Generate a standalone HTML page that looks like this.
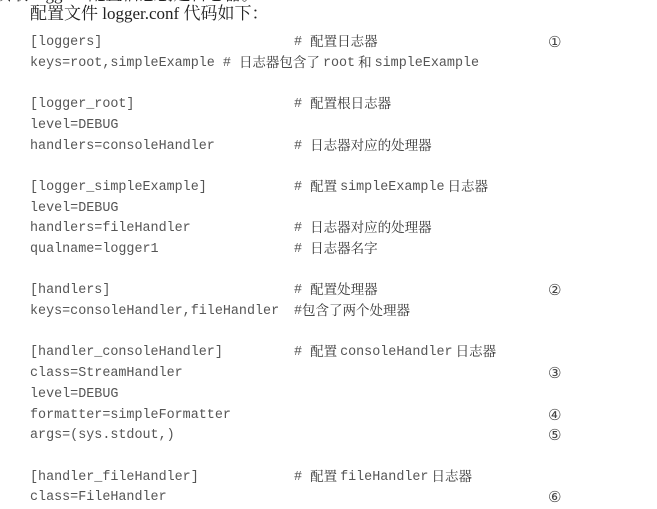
<!DOCTYPE html>
<html><head><meta charset="utf-8"><style>
html,body{margin:0;padding:0;background:#fff;width:657px;height:509px;overflow:hidden;position:relative}
.t{position:absolute;font-family:"Liberation Serif","Noto Serif CJK SC",serif;color:#222;font-size:17px;white-space:nowrap;line-height:20px}
.c,.m{position:absolute;display:flex;align-items:center;height:16px;white-space:pre;font-family:"Liberation Mono",monospace;font-size:13.4px;color:#555}
.c{left:30px}
.m{left:294px}
.z{font-family:"Noto Serif CJK SC",serif;font-size:13.5px;color:#333;line-height:16px;position:relative;top:-2px}
.s{margin:0 3px}
.n{position:absolute;left:548px;font-family:"DejaVu Sans",serif;font-size:15px;color:#444;line-height:16px}
</style></head><body>
<div class="t" style="left:-6px;top:-15px">读取 logger1 配置信息创建日志器。</div>
<div class="t" style="left:30px;top:4px">配置文件 logger.conf 代码如下：</div>

<div class="c" style="top:34px">[loggers]</div><div class="m" style="top:34px"># <span class="z">配置日志器</span></div><div class="n" style="top:34px">①</div>
<div class="c" style="top:55px">keys=root,simpleExample # <span class="z">日志器包含了</span><span class="s">root</span><span class="z">和</span><span class="s">simpleExample</span></div>

<div class="c" style="top:96px">[logger_root]</div><div class="m" style="top:96px"># <span class="z">配置根日志器</span></div>
<div class="c" style="top:117px">level=DEBUG</div>
<div class="c" style="top:138px">handlers=consoleHandler</div><div class="m" style="top:138px"># <span class="z">日志器对应的处理器</span></div>

<div class="c" style="top:179px">[logger_simpleExample]</div><div class="m" style="top:179px"># <span class="z">配置</span><span class="s">simpleExample</span><span class="z">日志器</span></div>
<div class="c" style="top:200px">level=DEBUG</div>
<div class="c" style="top:220px">handlers=fileHandler</div><div class="m" style="top:220px"># <span class="z">日志器对应的处理器</span></div>
<div class="c" style="top:241px">qualname=logger1</div><div class="m" style="top:241px"># <span class="z">日志器名字</span></div>

<div class="c" style="top:282px">[handlers]</div><div class="m" style="top:282px"># <span class="z">配置处理器</span></div><div class="n" style="top:282px">②</div>
<div class="c" style="top:303px">keys=consoleHandler,fileHandler</div><div class="m" style="top:303px">#<span class="z">包含了两个处理器</span></div>

<div class="c" style="top:344px">[handler_consoleHandler]</div><div class="m" style="top:344px"># <span class="z">配置</span><span class="s">consoleHandler</span><span class="z">日志器</span></div>
<div class="c" style="top:365px">class=StreamHandler</div><div class="n" style="top:365px">③</div>
<div class="c" style="top:386px">level=DEBUG</div>
<div class="c" style="top:407px">formatter=simpleFormatter</div><div class="n" style="top:407px">④</div>
<div class="c" style="top:427px">args=(sys.stdout,)</div><div class="n" style="top:427px">⑤</div>

<div class="c" style="top:469px">[handler_fileHandler]</div><div class="m" style="top:469px"># <span class="z">配置</span><span class="s">fileHandler</span><span class="z">日志器</span></div>
<div class="c" style="top:489px">class=FileHandler</div><div class="n" style="top:489px">⑥</div>
</body></html>
